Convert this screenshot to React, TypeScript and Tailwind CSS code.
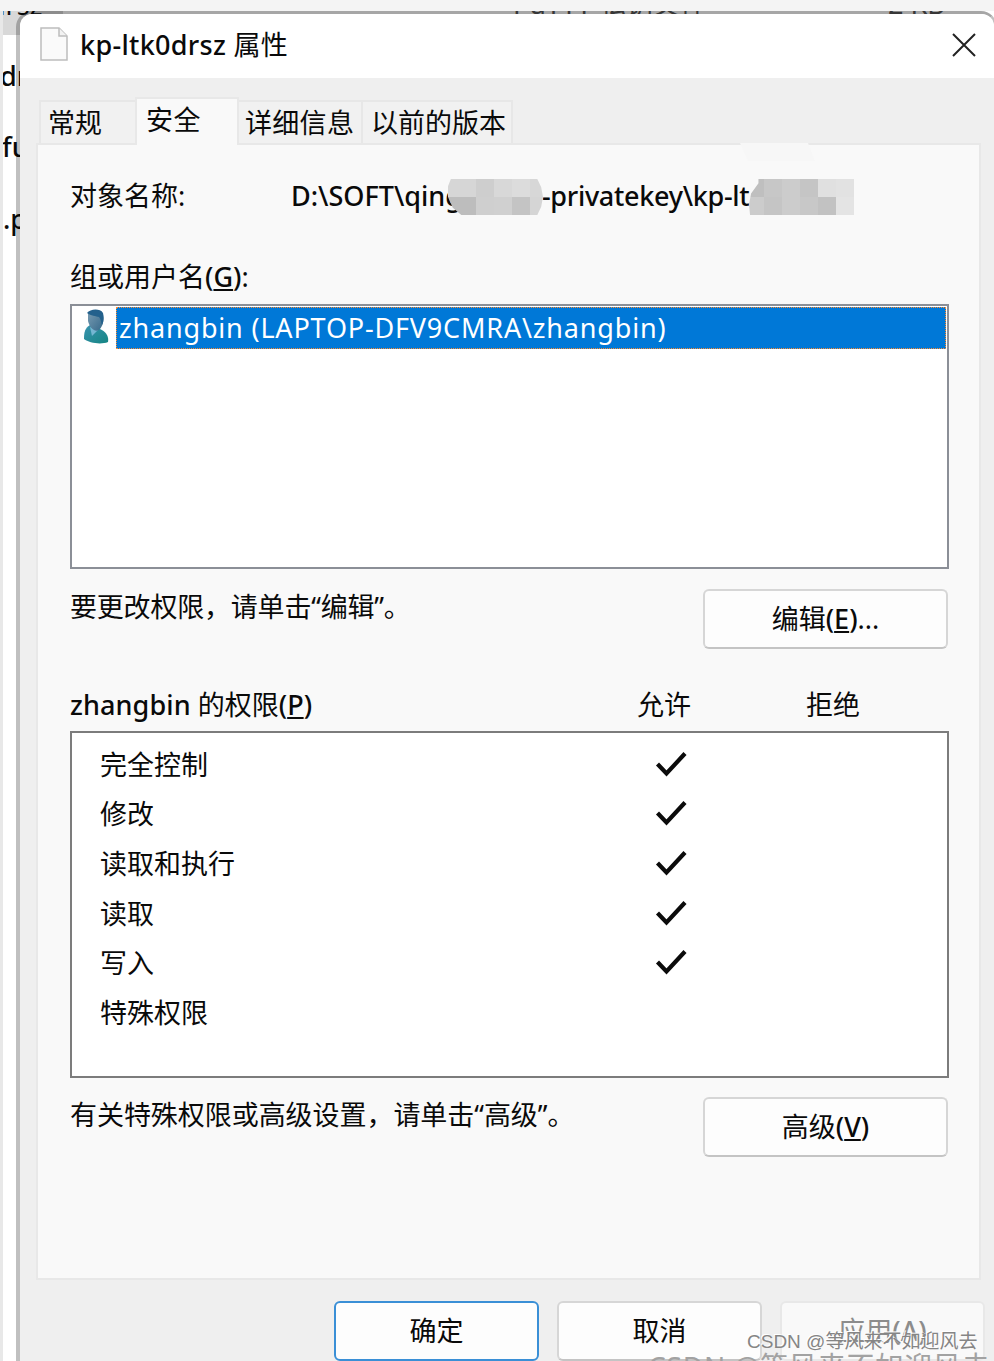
import React from "react";

const tabs = [
  { label: "常规", className: "w-[96px] pl-[7px]" },
  { label: "安全", className: "w-[104px]", active: true },
  { label: "详细信息", className: "w-[124px] pl-[6px] tracking-[0.3px]" },
  { label: "以前的版本", className: "w-[150px] pl-[8px]" },
];

const permissions = [
  { name: "完全控制", allow: true },
  { name: "修改", allow: true },
  { name: "读取和执行", allow: true },
  { name: "读取", allow: true },
  { name: "写入", allow: true },
  { name: "特殊权限", allow: false },
];

const FileIcon = () => (
  <svg width="28" height="34" viewBox="0 0 28 34" className="-mt-1 shrink-0">
    <path d="M1 1H19L27 9V33H1Z" fill="#fafafa" stroke="#bdbdbd" strokeWidth="1.5" />
    <path d="M19 1V9H27" fill="#f2f2f2" stroke="#bdbdbd" strokeWidth="1.5" />
  </svg>
);

const UserIcon = () => (
  <svg width="26" height="35" viewBox="0 0 26 35" className="-mt-[2px] shrink-0">
    <defs>
      <linearGradient id="body" x1="0" y1="0" x2="1" y2="1">
        <stop offset="0" stopColor="#3a93b0" />
        <stop offset="1" stopColor="#158583" />
      </linearGradient>
      <linearGradient id="face" x1="0" y1="0" x2="1" y2="1">
        <stop offset="0" stopColor="#7a9db3" />
        <stop offset="1" stopColor="#35688a" />
      </linearGradient>
    </defs>
    <path d="M7 16C2 19 1 23 1 30C6 34 18 36 25 33C26 27 23 23 17 20Z" fill="url(#body)" />
    <path d="M7 18L9 27L15 21Z" fill="#75b6d2" />
    <path d="M5 5C7 1 18 0 20 6C21 12 20 17 16 21C11 24 6 17 5 12Z" fill="url(#face)" />
    <path d="M4 4C7 0 17 -1 20 4C21 8 21 12 19 16C18 14 18 10 16 8C13 7 8 7 4 4Z" fill="#24618c" />
  </svg>
);

const Check = () => (
  <svg width="32" height="26" viewBox="0 0 32 26" className="-mt-[2px]">
    <path d="M2.5 13L11.5 22.5L30 2.5" fill="none" stroke="#0b0b0b" strokeWidth="4.2" />
  </svg>
);

const variants: any = {
  normal: "border-[#d6d6d6] border-b-[#c4c4c4] bg-[#fdfdfd]",
  primary: "border-[#3a8fd6] bg-[#fdfdfd]",
  disabled: "border-[#e8e8e8] bg-[#f9f9f9] text-[#8c8c8c]",
};

const Button = ({ children, variant = "normal", className = "" }: any) => (
  <button
    className={`flex h-[60px] shrink-0 items-center justify-center rounded-[6px] border-2 ${variants[variant]} ${className}`}
  >
    {children}
  </button>
);

const Key = ({ children }: any) => (
  <span className="font-medium">
    (<u className="decoration-2 underline-offset-2">{children}</u>)
  </span>
);

const Background = () => (
  <div className="flex h-full flex-col bg-white">
    <div className="h-[11px] shrink-0 bg-[#f4f4f4]" />
    <div className="flex flex-1">
      <div className="w-[3px] bg-[#e8e8e8]" />
      <div className="flex-1 overflow-hidden">
        <div className="flex h-6 w-full overflow-hidden bg-[linear-gradient(to_right,#d8d8d8_60px,#fff_60px)]">
          <span className="-mt-[24px] -ml-[14px] w-[524px] leading-[36px]">drsz</span>
          <span className="-mt-[25px] w-[375px] leading-[36px] text-[#555]">PuTTY 私钥文件</span>
          <span className="-mt-[25px] leading-[36px] text-[#555]">2 KB</span>
        </div>
        <div className="mt-[23px] -ml-[3px] leading-[36px] font-medium">drsz</div>
        <div className="mt-[35px] -ml-px leading-[36px] font-medium">full</div>
        <div className="mt-[36px] leading-[36px] font-medium">.pem</div>
      </div>
    </div>
  </div>
);

const App = () => {
  return (
    <div className="relative h-[1361px] w-[994px] overflow-hidden font-['Noto_Sans','Noto_Sans_CJK_SC',sans-serif] text-[27px] whitespace-nowrap text-[#0a0a0a]">
      <Background />

      <div className="absolute top-[11px] left-[16px] flex h-[1360px] w-[981px] flex-col rounded-t-[16px] border-t-[3px] border-r-[3px] border-l-[4px] border-t-black/35 border-r-black/25 border-l-black/25 bg-[#efefef] bg-clip-padding">
        <div className="flex h-[64px] shrink-0 items-center rounded-t-[12px] bg-white pr-[18px] pl-[20px]">
          <FileIcon />
          <span className="-mt-[2px] ml-[12px] leading-[36px] tracking-[0.3px]">
            <span className="font-medium">kp-ltk0drsz</span> 属性
          </span>
          <svg width="24" height="24" viewBox="0 0 24 24" className="-mt-[2px] ml-auto">
            <path d="M1 1L23 23M23 1L1 23" stroke="#222" strokeWidth="2" />
          </svg>
        </div>

        <div className="mt-[19px] flex h-[48px] items-end pl-[19px]">
          {tabs.map((tab) =>
            tab.active ? (
              <div
                key={tab.label}
                className={`z-10 h-[48px] border-x-2 border-t-2 border-[#e8e8e8] bg-[#f9f9f9] pt-[3px] pl-[9px] leading-[36px] tracking-[0.5px] ${tab.className}`}
              >
                {tab.label}
              </div>
            ) : (
              <div
                key={tab.label}
                className={`mb-[1px] h-[44px] border-t-2 border-r-2 border-[#e7e7e7] bg-[#f1f1f1] pt-[3px] leading-[36px] first:border-r-0 first:border-l-2 ${tab.className}`}
              >
                {tab.label}
              </div>
            )
          )}
        </div>

        <div className="-mt-[2px] ml-[16px] flex h-[1137px] w-[945px] shrink-0 flex-col border-2 border-[#e8e8e8] bg-[#f9f9f9] pt-[33px] pr-[30px] pl-[32px]">
          <div className="relative flex h-[36px] leading-[36px]">
            <span className="w-[221px]">对象名称:</span>
            <span className="font-medium">D:\SOFT\qing</span>
            <span className="absolute left-[472px] font-medium tracking-[-0.3px]">-privatekey\kp-lt</span>
            <div className="absolute top-px left-[378px] grid h-[36px] w-[95px] grid-cols-[28px_18px_18px_18px_13px] grid-rows-2 [clip-path:polygon(3%_0,94%_0,98%_22%,100%_50%,98%_78%,94%_100%,14%_100%,5%_80%,0_50%,0_20%)]">
              <i className="bg-[#d6d6d6]" />
              <i className="bg-[#cecece]" />
              <i className="bg-[#d8d8d8]" />
              <i className="bg-[#dcdcdc]" />
              <i className="bg-[#d7d7d7]" />
              <i className="bg-[#bdbdbd]" />
              <i className="bg-[#cfcfcf]" />
              <i className="bg-[#d0d0d0]" />
              <i className="bg-[#c4c4c4]" />
              <i className="bg-[#d5d5d5]" />
            </div>
            <div className="absolute top-px left-[679px] grid h-[36px] w-[105px] grid-cols-[15px_18px_18px_18px_18px_18px] grid-rows-2 [clip-path:polygon(9%_0,100%_0,100%_100%,1%_100%,0_70%,2%_40%,9%_12%)]">
              <i className="bg-[#bfbfbf]" />
              <i className="bg-[#c7c7c7]" />
              <i className="bg-[#cccccc]" />
              <i className="bg-[#c5c5c5]" />
              <i className="bg-[#e0e0e0]" />
              <i className="bg-[#e2e2e2]" />
              <i className="bg-[#cccccc]" />
              <i className="bg-[#c5c5c5]" />
              <i className="bg-[#cccccc]" />
              <i className="bg-[#c8c8c8]" />
              <i className="bg-[#c2c2c2]" />
              <i className="bg-[#e4e4e4]" />
            </div>
            <div className="absolute -top-[35px] left-[670px] h-[18px] w-[75px] bg-[#f7f7f7] [clip-path:polygon(0_0,68px_0,75px_100%,8px_100%)]" />
          </div>

          <div className="mt-[45px] leading-[36px]">
            组或用户名<Key>G</Key>:
          </div>
          <div className="mt-[9px] h-[265px] w-[879px] border-2 border-[#8b8f97] bg-white">
            <div className="flex h-[43px] items-center pl-[11px]">
              <UserIcon />
              <div className="ml-[7px] h-[42px] w-[830px] border border-dotted border-[#ff8c30] bg-[#0078d7] pl-[2px] leading-[40px] tracking-[0.82px] text-white">
                zhangbin (LAPTOP-DFV9CMRA\zhangbin)
              </div>
            </div>
          </div>

          <div className="mt-[20px] flex justify-between pr-[1px]">
            <span className="leading-[36px] tracking-[-0.2px]">要更改权限，请单击“编辑”。</span>
            <Button className="w-[245px]">
              编辑<Key>E</Key>...
            </Button>
          </div>

          <div className="mt-[38px] flex leading-[36px]">
            <span className="w-[567px]">
              <span className="font-medium tracking-[0.1px]">zhangbin</span> 的权限<Key>P</Key>
            </span>
            <span className="w-[169px]">允许</span>
            <span>拒绝</span>
          </div>
          <div className="mt-[8px] h-[347px] w-[879px] shrink-0 border-2 border-[#7c7c7c] bg-white pt-[7px] pl-[28px]">
            {permissions.map((p) => (
              <div key={p.name} className="flex h-[49.6px] items-center">
                <span className="w-[555px] leading-[36px]">{p.name}</span>
                {p.allow && <Check />}
              </div>
            ))}
          </div>

          <div className="mt-[19px] flex justify-between pr-[1px]">
            <span className="leading-[36px] tracking-[-0.05px]">有关特殊权限或高级设置，请单击“高级”。</span>
            <Button className="w-[245px]">
              高级<Key>V</Key>
            </Button>
          </div>
        </div>

        <div className="mt-[21px] flex gap-[18px] pl-[314px]">
          <Button variant="primary" className="w-[205px]">确定</Button>
          <Button className="w-[205px]">取消</Button>
          <Button variant="disabled" className="w-[205px]">
            应用<span className="font-medium">(A)</span>
          </Button>
        </div>
      </div>

      <div className="absolute top-[1346px] left-[648px] text-[28px] leading-[40px] tracking-[0.8px] text-[#a2a2a2]">
        CSDN @等风来不如迎风去
      </div>
      <div className="absolute top-[1328px] left-[747px] font-['Liberation_Sans','Noto_Sans_CJK_SC',sans-serif] text-[19px] leading-[28px] text-[#858585] [text-shadow:-1px_-1px_0_#fff]">
        CSDN @等风来不如迎风去
      </div>
    </div>
  );
};

export default App;
